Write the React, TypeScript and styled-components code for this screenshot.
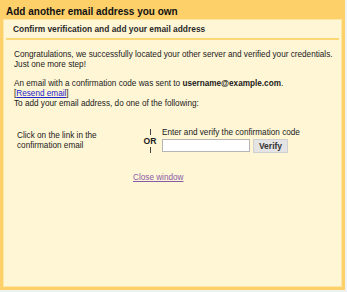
import React, { useState } from "react";
import styled, { createGlobalStyle } from "styled-components";

const GlobalStyle = createGlobalStyle`
  html, body {
    margin: 0;
    padding: 0;
    background: #f1f1f1;
    font-family: "Liberation Sans", Arial, sans-serif;
  }
`;

function App() {
  const [code, setCode] = useState("");
  return (
    <>
      <GlobalStyle />
      <Frame>
        <Title>Add another email address you own</Title>
        <Panel>
          <SubTitle>Confirm verification and add your email address</SubTitle>
          <Body>
            <Para>
              Congratulations, we successfully located your other server and verified your credentials.
              <br />
              Just one more step!
            </Para>
            <Para>
              An email with a confirmation code was sent to <b>username@example.com</b>.
              <br />[<BlueLink href="#">Resend email</BlueLink>]
              <br />
              To add your email address, do one of the following:
            </Para>
            <Options>
              <Option>
                Click on the link in the
                <br />
                confirmation email
              </Option>
              <Or>
                <Bar />
                <span>OR</span>
                <Bar />
              </Or>
              <CodeBox>
                <span>Enter and verify the confirmation code</span>
                <CodeRow>
                  <CodeInput value={code} onChange={e => setCode(e.target.value)} />
                  <VerifyButton>Verify</VerifyButton>
                </CodeRow>
              </CodeBox>
            </Options>
            <CloseRow>
              <CloseLink href="#">Close window</CloseLink>
            </CloseRow>
          </Body>
        </Panel>
      </Frame>
    </>
  );
}

export default App;

const Frame = styled.div`
  box-sizing: border-box;
  width: 345px;
  height: 290px;
  border: 3px solid #fdd06a;
  border-top: none;
  background: #fdd06a;
  display: flex;
  flex-direction: column;
`;

const Title = styled.div`
  font-size: 10px;
  font-weight: bold;
  color: #111;
  padding: 6px 3px 1px;
  line-height: 12px;
`;

const Panel = styled.div`
  flex: 1;
  background: #fff6d6;
  border: 1px solid #fde7a2;
  display: flex;
  flex-direction: column;
`;

const SubTitle = styled.div`
  font-size: 8.4px;
  font-weight: bold;
  color: #2a2a2a;
  line-height: 10px;
  margin: 0 2px;
  padding: 4px 7px 4px;
  border-bottom: 2px solid #fcd775;
`;

const Body = styled.div`
  padding: 10px 10px 0;
  font-size: 8.2px;
  color: #1a1a1a;
  line-height: 10px;
`;

const Para = styled.p`
  margin: 0 0 9px;
  white-space: nowrap;
`;

const BlueLink = styled.a`
  color: #2222cc;
  text-decoration: underline;
`;

const Options = styled.div`
  display: flex;
  align-items: center;
  margin-top: 19px;
`;

const Option = styled.div`
  width: 123px;
  padding-left: 3px;
`;

const Or = styled.div`
  width: 20px;
  display: flex;
  flex-direction: column;
  align-items: center;
  gap: 2px;
  font-size: 8.6px;
  font-weight: bold;
  line-height: 8px;
`;

const Bar = styled.span`
  display: block;
  width: 1px;
  height: 6px;
  background: #444;
`;

const CodeBox = styled.div`
  display: flex;
  flex-direction: column;
  gap: 1px;
  padding-left: 2px;
`;

const CodeRow = styled.div`
  display: flex;
  gap: 3px;
`;

const CodeInput = styled.input`
  box-sizing: border-box;
  width: 88px;
  height: 13px;
  border: 1px solid #b5b5b5;
  background: #fff;
  padding: 0;
`;

const VerifyButton = styled.button`
  box-sizing: border-box;
  width: 35px;
  height: 14px;
  border: 1px solid #d0d0d0;
  background: #e4e4e4;
  font-family: "Liberation Sans", Arial, sans-serif;
  font-size: 8.5px;
  font-weight: bold;
  color: #333;
  padding: 0;
  line-height: 12px;
`;

const CloseRow = styled.div`
  margin-top: 20px;
  padding-left: 119px;
`;

const CloseLink = styled.a`
  color: #8a5aa8;
  text-decoration: underline;
`;
